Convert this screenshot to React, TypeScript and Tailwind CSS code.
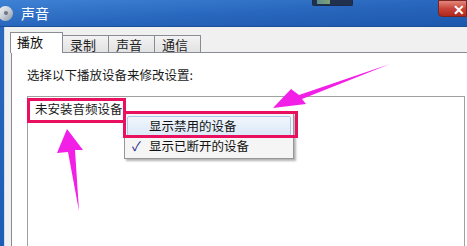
import React from "react";

const font = { fontFamily: '"Microsoft YaHei", "Noto Sans CJK SC", "Noto Sans", sans-serif' };

function Tab({ label, active }: { label: string; active?: boolean }) {
  if (active) {
    return (
      <div className="relative z-10 -mr-[1px] h-[21px] w-[53px] border border-b-0 border-[#898c95] bg-white pl-[6px] text-[13px] leading-[18px] text-[#111]">
        {label}
      </div>
    );
  }
  return (
    <div className="mt-[2px] -mr-[1px] h-[18px] w-[47px] border border-b-0 border-[#898c95] bg-gradient-to-b from-[#f3f3f3] to-[#e1e1e1] pl-[7px] text-[13px] leading-[17px] text-[#222]">
      {label}
    </div>
  );
}

export default function App() {
  return (
    <div className="relative h-[246px] w-[467px] overflow-hidden bg-white" style={font}>
      {/* title bar */}
      <div className="flex h-[27px] items-center overflow-hidden bg-gradient-to-br from-[#3f82d4] via-[#2867bd] to-[#1d58ad] border-b border-[#1b4f98]">
        <div className="-ml-[2px] mr-[8px] flex h-[15px] w-[15px] items-center justify-center rounded-full bg-gradient-to-br from-[#f8f8f8] via-[#c9d0d8] to-[#8a96a4]">
          <div className="h-[4px] w-[4px] rounded-full bg-[#6d7886]" />
        </div>
        <span className="text-[14px] leading-none text-white">声音</span>
        <div className="ml-auto mb-[9px] flex h-[17px] w-[29px] items-center justify-end rounded-bl-[4px] border border-[#7a2620] bg-gradient-to-b from-[#e2867b] via-[#c8443a] to-[#b0271c] pr-[1px] text-[14px] font-bold leading-none text-white">
          ✕
        </div>
      </div>
      {/* other-window thumbnail peeking at top */}
      <div className="absolute left-[312px] top-0 flex h-[6px] w-[41px] rounded-b-[2px] border border-t-0 border-[#1c2b45] bg-[#20304d] px-[4px]">
        <div className="h-[4px] w-[13px] bg-gradient-to-r from-[#5e8d8e] to-[#7fa173]" />
      </div>

      <div className="flex h-[219px]">
        <div className="w-[4px] bg-gradient-to-b from-[#2a68bd] to-[#1c5cb5]" />
        <div className="w-[1px] bg-[#cfdcec]" />
        <div className="flex flex-1 flex-col bg-[#f0f0f0] pl-[5px]">
          {/* tab strip */}
          <div className="flex h-[26px] items-end pt-[5px]">
            <Tab label="播放" active />
            <Tab label="录制" />
            <Tab label="声音" />
            <Tab label="通信" />
          </div>
          {/* panel */}
          <div className="-mt-[1px] ml-[1px] flex-1 border-l border-t border-[#898c95] bg-white pl-[15px] pt-[14px]">
            <div className="text-[12.5px] leading-[16px] text-[#1a1a1a]">选择以下播放设备来修改设置:</div>
            <div className="mt-[13px] h-[200px] w-[438px] border border-[#a0a0a0] bg-white pl-[7px] pt-[5px]">
              <div className="text-[12.5px] leading-[14px] text-[#1a1a1a]">未安装音频设备</div>
            </div>
          </div>
        </div>
      </div>

      {/* context menu */}
      <div className="absolute left-[124px] top-[113px] w-[170px] border border-[#979797] bg-[#f5f5f5] py-[2px] shadow-[2px_2px_2px_rgba(0,0,0,0.3)]">
        <div className="mx-[2px] flex h-[20px] items-center rounded-[2px] border border-[#a8c8ec] bg-gradient-to-b from-[#f1f6fc] to-[#dce9f8] pl-[21px] text-[12.5px] text-[#111]">
          显示禁用的设备
        </div>
        <div className="mx-[2px] flex h-[20px] items-center text-[12.5px] text-[#111]">
          <span className="w-[22px] pl-[5px] text-[13px] text-[#1a2a8a]">✓</span>
          显示已断开的设备
        </div>
      </div>

      {/* red annotation boxes */}
      <div className="absolute left-[27px] top-[98px] h-[25px] w-[99px] border-[3px] border-[#ea1060]" />
      <div className="absolute left-[123px] top-[111px] h-[27px] w-[175px] border-[3px] border-[#ea1060]" />

      {/* magenta arrows */}
      <svg className="absolute left-0 top-0" width="467" height="246" viewBox="0 0 467 246">
        <polygon points="390,64 299,95 291,89 273,108 306,104 302,99" fill="#f21fe6" />
        <polygon points="67,129 83,150 75,150 79,211 68,152 57,153" fill="#f21fe6" />
      </svg>
    </div>
  );
}
